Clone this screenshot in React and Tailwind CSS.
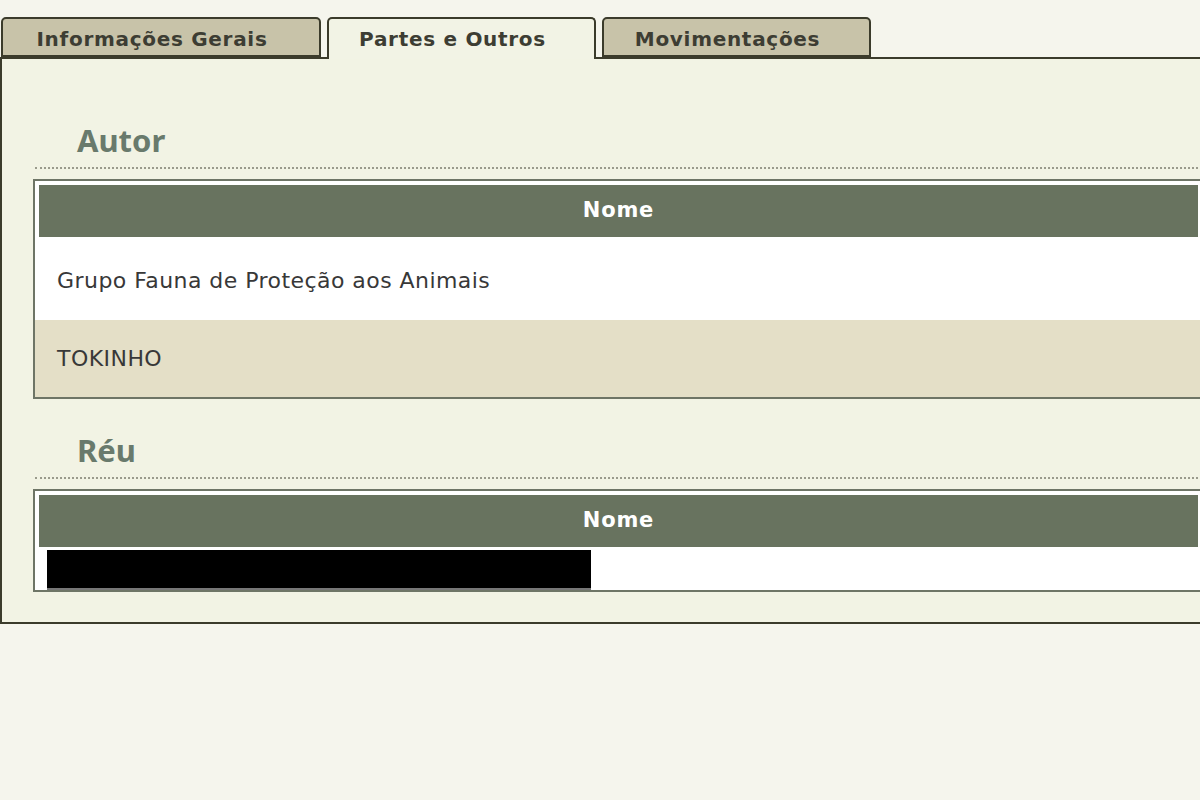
import React from 'react';

const tabs = [
  { label: 'Informações Gerais', width: 'w-[320px]', active: false },
  { label: 'Partes e Outros', width: 'w-[269px]', active: true },
  { label: 'Movimentações', width: 'w-[269px]', active: false },
];

const Tab = ({ label, width, active }) => (
  <div
    className={`${width} flex items-center justify-center pr-[18px] border-2 border-[#3b3b2b] rounded-t-[5px] text-[20px] tracking-[0.7px] font-bold text-[#3d3d33] ${
      active ? 'bg-[#f2f3e5] border-b-0 h-[42px] -mb-[2px] relative z-10' : 'h-[40px] pt-[3px] bg-[#c8c3a9]'
    }`}
  >
    {label}
  </div>
);

const SectionTitle = ({ children }) => (
  <div className="ml-[33px] border-b-2 border-dotted border-[#9a9a8c]">
    <h2
      className="pl-[42px] pb-[9px] text-[31px] font-bold text-[#697a6c] leading-[36px]"
      style={{ fontFamily: '"Noto Sans", "DejaVu Sans", sans-serif' }}
    >
      {children}
    </h2>
  </div>
);

const Header = () => (
  <div className="mx-[4px] mt-[4px] h-[52px] bg-[#68735f] flex items-center justify-center text-white font-bold text-[21px] tracking-[0.8px]">
    Nome
  </div>
);

export default function App() {
  return (
    <div
      className="w-[1200px] h-[800px] overflow-hidden bg-[#f5f5ed] pt-[17px]"
      style={{ fontFamily: '"DejaVu Sans", Verdana, sans-serif' }}
    >
      <div className="flex items-end gap-[6px] pl-[1px]">
        {tabs.map((t) => (
          <Tab key={t.label} {...t} />
        ))}
      </div>
      <div className="w-[1220px] h-[567px] bg-[#f2f3e4] border-2 border-[#3b3b2b] pt-[63px]">
        <SectionTitle>Autor</SectionTitle>
        <div className="ml-[31px] w-[1169px] mt-[10px] border-2 border-[#6e7566] border-r-0 bg-white">
          <Header />
          <div className="h-[83px] flex items-center pt-[3px] pl-[22px] text-[22px] tracking-[0.45px] text-[#383838]">
            Grupo Fauna de Proteção aos Animais
          </div>
          <div className="h-[77px] flex items-center pl-[22px] text-[22px] tracking-[0.45px] text-[#383838] bg-[#e4dfc7]">
            TOKINHO
          </div>
        </div>
        <div className="mt-[33px]">
          <SectionTitle>Réu</SectionTitle>
        </div>
        <div className="ml-[31px] w-[1169px] mt-[10px] border-2 border-[#6e7566] border-r-0 bg-white">
          <Header />
          <div className="h-[43px] flex items-start pt-[3px] pl-[12px]">
            <div className="w-[544px] h-[40px] bg-black border-b-2 border-[#777]" />
          </div>
        </div>
      </div>
    </div>
  );
}
